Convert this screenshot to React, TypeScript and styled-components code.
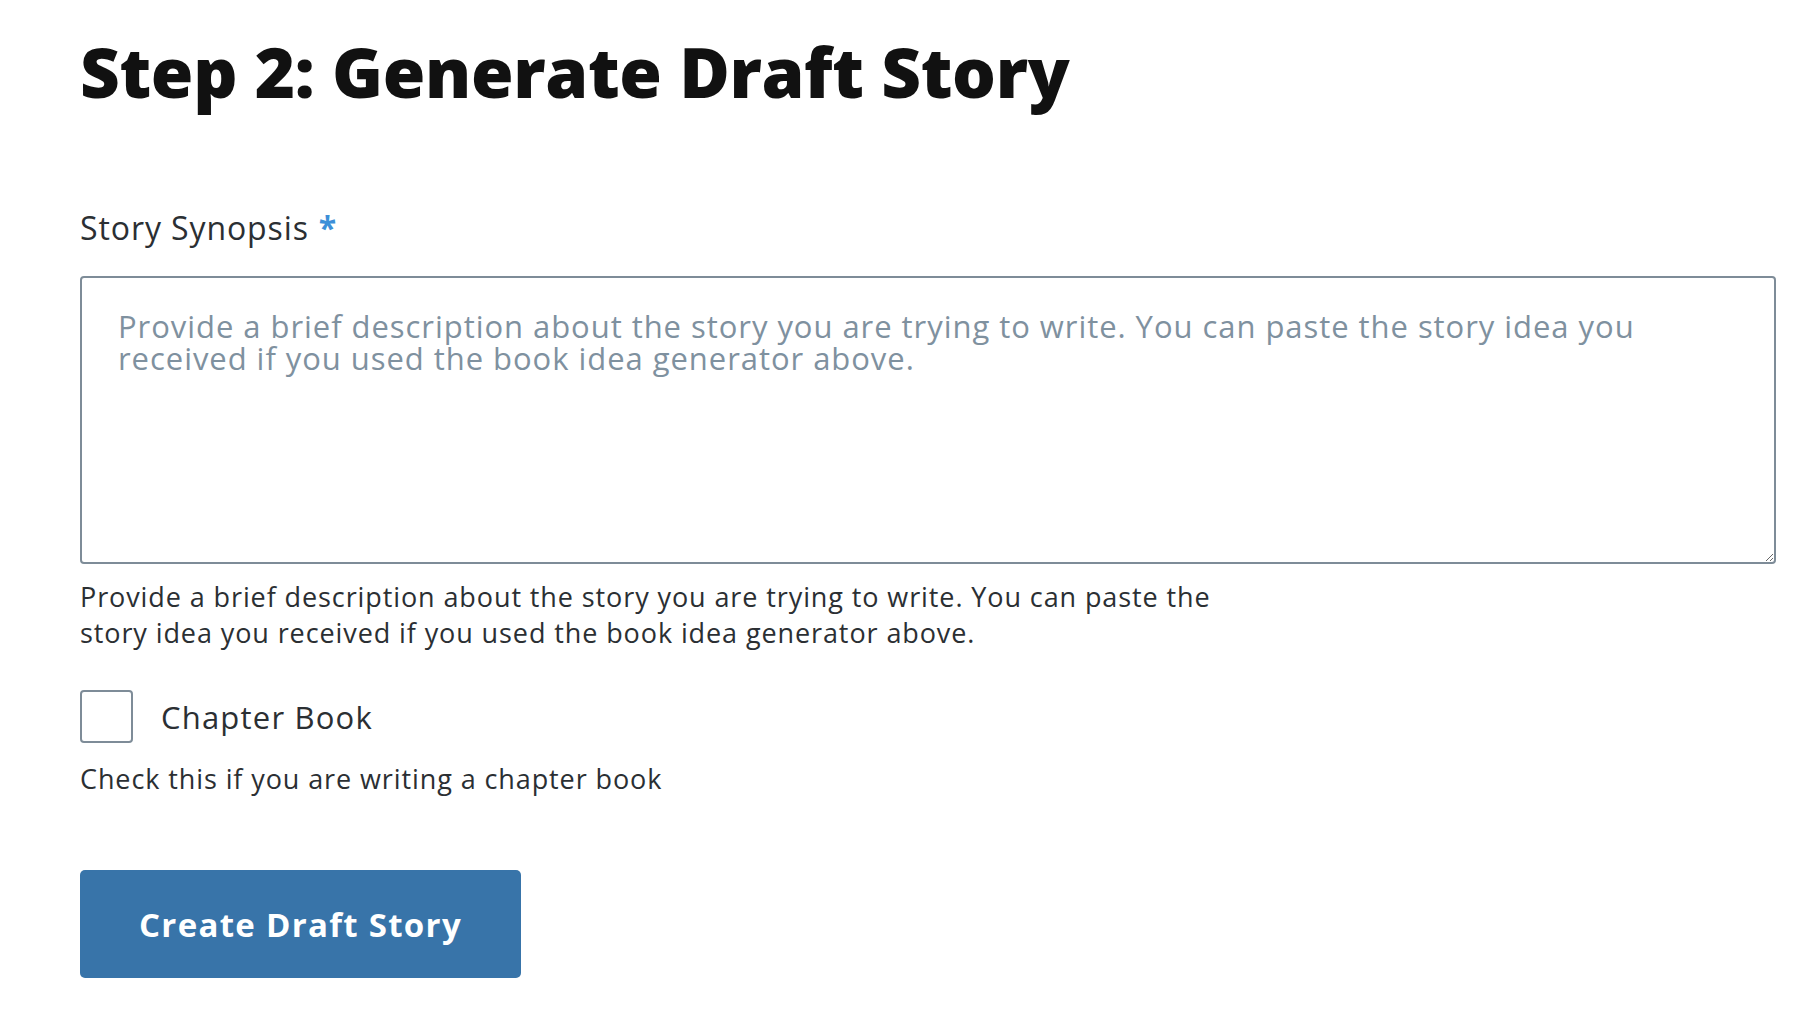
import React from "react";
import styled, { createGlobalStyle } from "styled-components";

const GlobalStyle = createGlobalStyle`
  html, body {
    margin: 0;
    padding: 0;
    background: #ffffff;
  }
  body {
    font-family: "Open Sans", "Noto Sans", sans-serif;
    color: #2b2f33;
  }
`;

const Page = styled.div`
  display: flex;
  flex-direction: column;
  align-items: flex-start;
  padding: 30px 36px 40px 80px;
`;

const Title = styled.h1`
  margin: 0 0 98px;
  font-size: 69px;
  line-height: 82px;
  font-weight: 800;
  color: #111111;
  letter-spacing: -0.35px;
`;

const Field = styled.div`
  display: flex;
  flex-direction: column;
  align-self: stretch;
`;

const Label = styled.label`
  font-size: 32px;
  line-height: 36px;
  letter-spacing: 0.9px;
  color: #2b2f33;
  margin-bottom: 30px;
`;

const Required = styled.span`
  color: #3d8fd8;
  margin-left: 10px;
  font-weight: 700;
`;

const TextArea = styled.textarea`
  box-sizing: border-box;
  width: 100%;
  height: 288px;
  padding: 32px 36px;
  border: 2px solid #7e8c98;
  border-radius: 4px;
  font-family: inherit;
  font-size: 31px;
  line-height: 32px;
  letter-spacing: 0.95px;
  color: #2b2f33;
  resize: vertical;
  outline: none;

  &::placeholder {
    color: #7f919f;
  }
`;

const Hint = styled.p<{ $top: number }>`
  margin: ${(p) => p.$top}px 0 0;
  max-width: 1170px;
  font-size: 27px;
  line-height: 36px;
  letter-spacing: 0.9px;
  color: #2b2f33;
`;

const CheckRow = styled.label`
  display: flex;
  align-items: center;
  gap: 28px;
  margin-top: 39px;
  font-size: 31px;
  line-height: 36px;
  letter-spacing: 1.2px;
  color: #2b2f33;
  cursor: pointer;
`;

const Box = styled.input`
  appearance: none;
  margin: 0;
  width: 53px;
  height: 53px;
  box-sizing: border-box;
  border: 2px solid #7e8c98;
  border-radius: 4px;
  background: #fff;
`;

const Button = styled.button`
  margin-top: 73px;
  width: 441px;
  height: 108px;
  border: none;
  border-radius: 5px;
  background: #3874a9;
  color: #ffffff;
  font-family: inherit;
  font-size: 33px;
  font-weight: 700;
  letter-spacing: 1.3px;
  cursor: pointer;
`;

const App: React.FC = () => {
  return (
    <Page>
      <GlobalStyle />
      <Title>Step 2: Generate Draft Story</Title>
      <Field>
        <Label>
          Story Synopsis<Required>*</Required>
        </Label>
        <TextArea placeholder="Provide a brief description about the story you are trying to write. You can paste the story idea you received if you used the book idea generator above." />
        <Hint $top={15}>
          Provide a brief description about the story you are trying to write. You can paste the
          story idea you received if you used the book idea generator above.
        </Hint>
      </Field>
      <CheckRow>
        <Box type="checkbox" />
        Chapter Book
      </CheckRow>
      <Hint $top={18}>Check this if you are writing a chapter book</Hint>
      <Button>Create Draft Story</Button>
    </Page>
  );
};

export default App;
